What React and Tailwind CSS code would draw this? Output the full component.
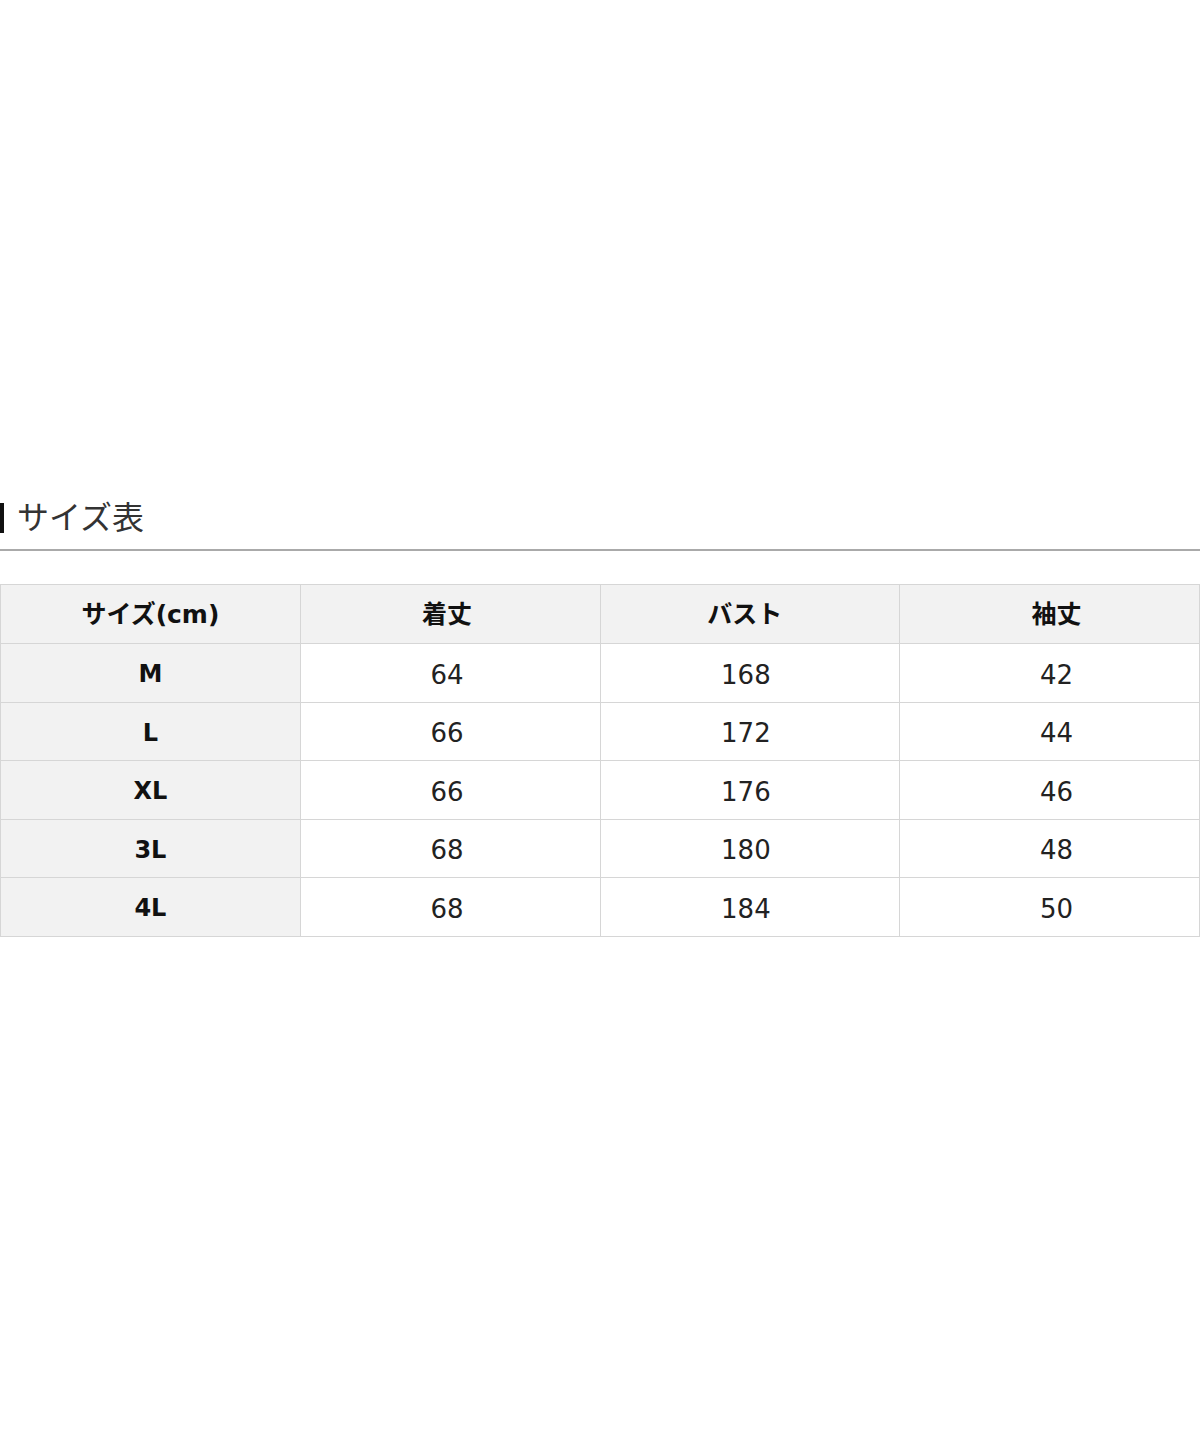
const rows = [
  ["M", "64", "168", "42"],
  ["L", "66", "172", "44"],
  ["XL", "66", "176", "46"],
  ["3L", "68", "180", "48"],
  ["4L", "68", "184", "50"],
];

const headPad = ["", "pr-[6px]", "pr-[10px]", "pl-[14px]"];

export default function App() {
  return (
    <div
      className="w-[1200px] h-[1440px] bg-white text-[#222]"
      style={{ fontFamily: '"DejaVu Sans", "Noto Sans CJK JP", sans-serif' }}
    >
      <div className="pt-[500px]">
        {/* Heading */}
        <div className="flex items-center h-[36px]">
          <div className="w-[4px] h-[30px] bg-[#111]" />
          <h2 className="ml-[13px] text-[32px] leading-none font-normal text-[#333]">サイズ表</h2>
        </div>
        <div className="mt-[13px] h-[2px] bg-[#aaa]" />

        {/* Size table */}
        <table className="mt-[33px] w-full border-collapse table-fixed">
          <thead>
            <tr className="h-[59px] bg-[#f2f2f2]">
              {["サイズ(cm)", "着丈", "バスト", "袖丈"].map((h, i) => (
                <th
                  key={h}
                  className={"border border-[#d6d6d6] pt-[2px] text-[25px] font-bold text-[#111] text-center " + headPad[i]}
                >
                  {h}
                </th>
              ))}
            </tr>
          </thead>
          <tbody>
            {rows.map((r) => (
              <tr key={r[0]} className="h-[58.5px]">
                <td className="border border-[#d6d6d6] bg-[#f2f2f2] pt-[3px] text-center text-[24px] font-bold text-[#111]">{r[0]}</td>
                <td className="border border-[#d6d6d6] pt-[5px] pr-[6px] text-center text-[26px] text-[#222]">{r[1]}</td>
                <td className="border border-[#d6d6d6] pt-[5px] pr-[8px] text-center text-[26px] text-[#222]">{r[2]}</td>
                <td className="border border-[#d6d6d6] pt-[5px] pl-[14px] text-center text-[26px] text-[#222]">{r[3]}</td>
              </tr>
            ))}
          </tbody>
        </table>
      </div>
    </div>
  );
}
